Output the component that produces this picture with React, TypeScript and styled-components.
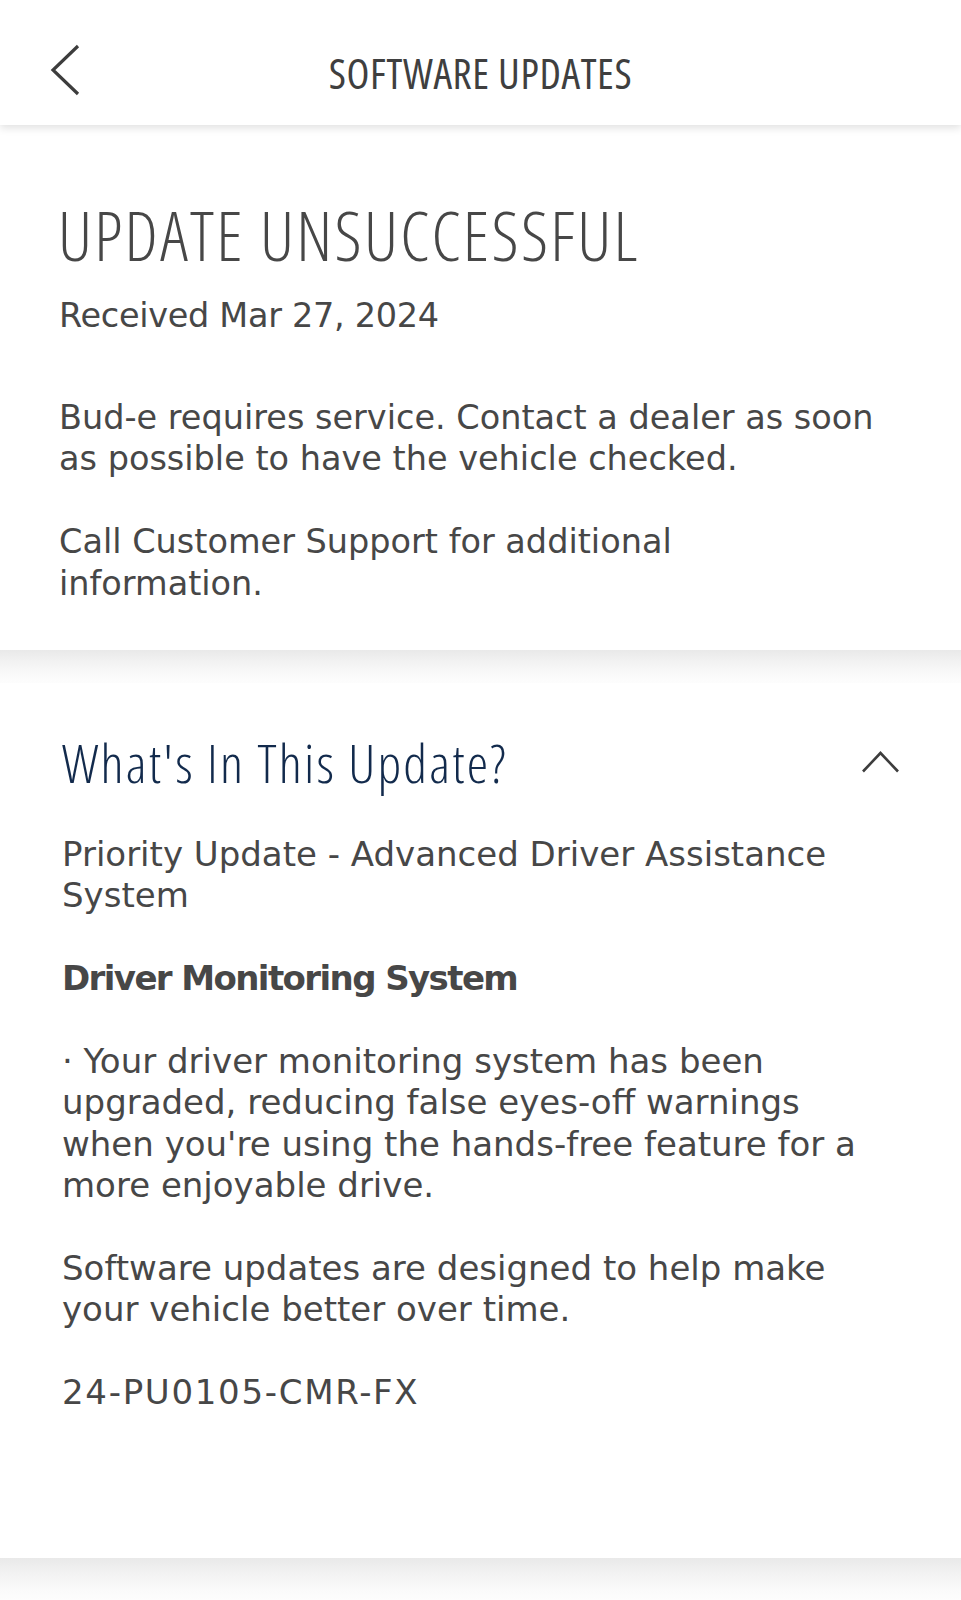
import React from "react";
import styled, { createGlobalStyle } from "styled-components";

const GlobalStyle = createGlobalStyle`
  html, body { margin: 0; padding: 0; background: #fcfcfc; }
  * { box-sizing: border-box; }
`;

const Page = styled.div`
  width: 961px;
  min-height: 1600px;
  display: flex;
  flex-direction: column;
  background: #fcfcfc;
`;

const Header = styled.header`
  position: relative;
  z-index: 2;
  height: 125px;
  padding-top: 20px;
  background: #fff;
  box-shadow: 0 3px 8px rgba(0, 0, 0, 0.12);
  display: grid;
  grid-template-columns: 1fr auto 1fr;
  align-items: center;
`;

const BackButton = styled.button`
  justify-self: start;
  margin: -5px 0 0 49px;
  padding: 0;
  border: 0;
  background: none;
  display: flex;
  cursor: pointer;
`;

const HeaderTitle = styled.h1`
  margin: 0;
  font-family: "Open Sans", "Noto Sans", sans-serif;
  font-stretch: 75%;
  font-weight: 400;
  font-size: 42px;
  line-height: 54px;
  color: #3f3f3f;
  letter-spacing: 0.6px;
`;

const Card = styled.section<{ $padTop: number; $padBottom: number; $padLeft: number }>`
  background: #fff;
  padding: ${(p) => p.$padTop}px 61px ${(p) => p.$padBottom}px ${(p) => p.$padLeft}px;
  display: flex;
  flex-direction: column;
`;

const Band = styled.div<{ $h: number }>`
  height: ${(p) => p.$h}px;
  flex: none;
  background: linear-gradient(#e9e9e9 0%, #f2f2f2 35%, #fafafa 75%, #fdfdfd 100%);
`;

const StatusTitle = styled.h2`
  margin: 0 0 0 -1px;
  font-family: "Open Sans", "Noto Sans", sans-serif;
  font-stretch: 75%;
  font-weight: 350;
  font-size: 68px;
  line-height: 76px;
  color: #474747;
  letter-spacing: 2.3px;
`;

const Text = styled.p<{ $gap?: number; $bold?: boolean; $size?: number; $spacing?: number }>`
  margin: 0 0 ${(p) => p.$gap ?? 41.4}px 0;
  font-family: "DejaVu Sans", "Noto Sans", sans-serif;
  font-size: ${(p) => p.$size ?? 33.5}px;
  line-height: 41.4px;
  font-weight: ${(p) => (p.$bold ? 700 : 400)};
  letter-spacing: ${(p) => p.$spacing ?? 0}px;
  color: #474747;
  &:last-child { margin-bottom: 0; }
`;

const Spacer = styled.div<{ $h: number }>`
  height: ${(p) => p.$h}px;
  flex: none;
`;

const SectionHead = styled.div`
  display: flex;
  align-items: center;
  justify-content: space-between;
  margin-bottom: 42px;
`;

const SectionTitle = styled.h3`
  margin: 0;
  font-family: "Open Sans", "Noto Sans", sans-serif;
  font-stretch: 75%;
  font-weight: 350;
  font-size: 54px;
  line-height: 60px;
  color: #122a4c;
  letter-spacing: 2.2px;
`;

const ToggleButton = styled.button`
  padding: 0;
  border: 0;
  background: none;
  display: flex;
  cursor: pointer;
`;

function ChevronLeft() {
  return (
    <svg width="32" height="54" viewBox="0 0 32 54" fill="none">
      <path d="M29 3 L4 27 L29 51" stroke="#3d3d3d" strokeWidth="3.2" strokeLinecap="butt" strokeLinejoin="miter" />
    </svg>
  );
}

function ChevronUp() {
  return (
    <svg width="40" height="26" viewBox="0 0 40 26" fill="none">
      <path d="M3 22.5 L20.5 4 L38 22.5" stroke="#3d3d3d" strokeWidth="2.6" strokeLinecap="butt" strokeLinejoin="miter" />
    </svg>
  );
}

const S2 = 34;

export default function App() {
  return (
    <>
      <GlobalStyle />
      <Page>
        <Header>
          <BackButton aria-label="Back">
            <ChevronLeft />
          </BackButton>
          <HeaderTitle>SOFTWARE UPDATES</HeaderTitle>
          <span />
        </Header>

        <Card $padTop={72} $padBottom={46} $padLeft={59}>
          <StatusTitle>UPDATE UNSUCCESSFUL</StatusTitle>
          <Spacer $h={22} />
          <Text $gap={60.6} $spacing={-0.3}>Received Mar 27, 2024</Text>
          <Text>
            Bud-e requires service. Contact a dealer as soon
            <br />
            as possible to have the vehicle checked.
          </Text>
          <Text>
            Call Customer Support for additional
            <br />
            information.
          </Text>
        </Card>

        <Band $h={33} />

        <Card $padTop={49} $padBottom={144} $padLeft={62}>
          <SectionHead>
            <SectionTitle>What's In This Update?</SectionTitle>
            <ToggleButton aria-label="Collapse">
              <ChevronUp />
            </ToggleButton>
          </SectionHead>
          <Text $size={S2}>
            Priority Update - Advanced Driver Assistance
            <br />
            System
          </Text>
          <Text $size={S2} $bold $spacing={-1.6}>Driver Monitoring System</Text>
          <Text $size={S2}>
            · Your driver monitoring system has been
            <br />
            upgraded, reducing false eyes-off warnings
            <br />
            when you're using the hands-free feature for a
            <br />
            more enjoyable drive.
          </Text>
          <Text $size={S2}>
            Software updates are designed to help make
            <br />
            your vehicle better over time.
          </Text>
          <Text $size={S2} $spacing={1.7}>24-PU0105-CMR-FX</Text>
        </Card>

        <Band $h={42} />
      </Page>
    </>
  );
}
